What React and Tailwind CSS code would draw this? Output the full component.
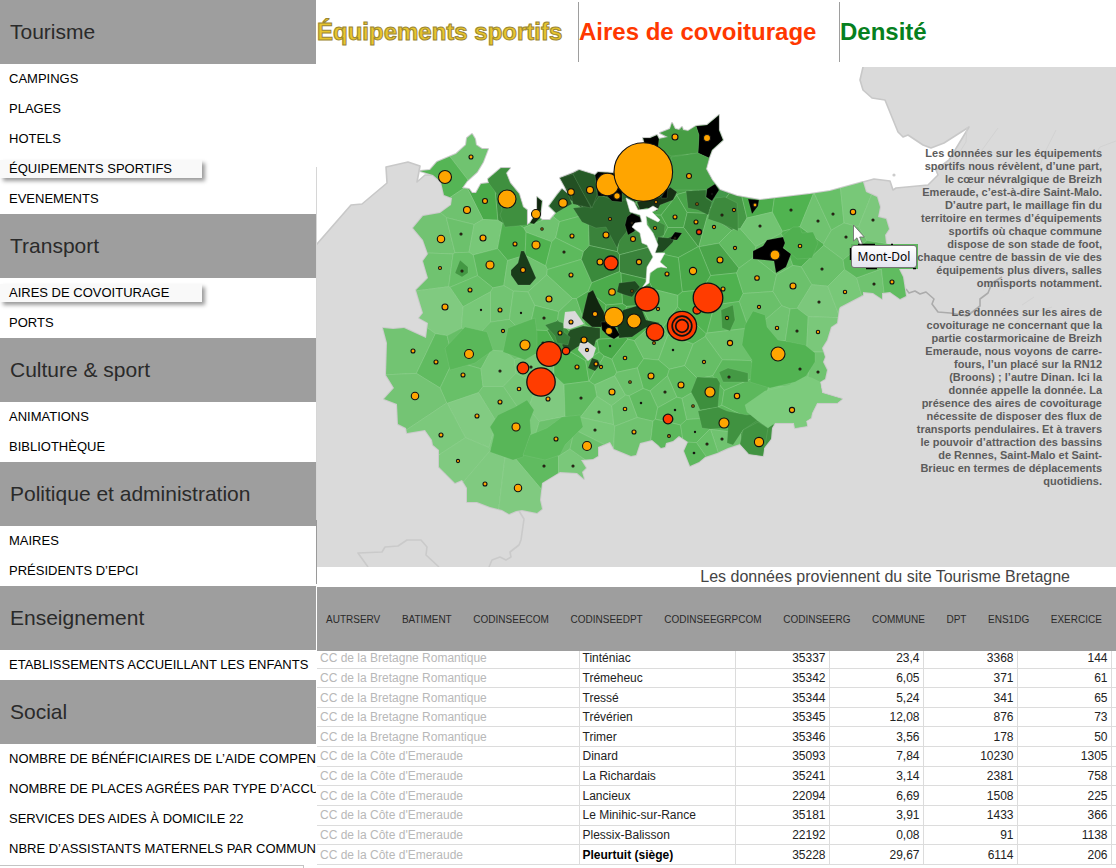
import React from "react";

const MENU = [
  { title: "Tourisme", items: ["CAMPINGS", "PLAGES", "HOTELS", "ÉQUIPEMENTS SPORTIFS", "EVENEMENTS"] },
  { title: "Transport", items: ["AIRES DE COVOITURAGE", "PORTS"] },
  { title: "Culture & sport", items: ["ANIMATIONS", "BIBLIOTHÈQUE"] },
  { title: "Politique et administration", items: ["MAIRES", "PRÉSIDENTS D’EPCI"] },
  { title: "Enseignement", items: ["ETABLISSEMENTS ACCUEILLANT LES ENFANTS"] },
  {
    title: "Social",
    items: [
      "NOMBRE DE BÉNÉFICIAIRES DE L’AIDE COMPEN",
      "NOMBRE DE PLACES AGRÉES PAR TYPE D’ACCU",
      "SERVICES DES AIDES À DOMICILE 22",
      "NBRE D’ASSISTANTS MATERNELS PAR COMMUN",
    ],
  },
];
const ACTIVE = ["ÉQUIPEMENTS SPORTIFS", "AIRES DE COVOITURAGE"];

const FIELDS = ["AUTRSERV", "BATIMENT", "CODINSEECOM", "CODINSEEDPT", "CODINSEEGRPCOM", "CODINSEERG", "COMMUNE", "DPT", "ENS1DG", "EXERCICE"];

const BR = "CC de la Bretagne Romantique";
const CE = "CC de la Côte d'Emeraude";
const ROWS = [
  [BR, "Tinténiac", "35337", "23,4", "3368", "144"],
  [BR, "Trémeheuc", "35342", "6,05", "371", "61"],
  [BR, "Tressé", "35344", "5,24", "341", "65"],
  [BR, "Trévérien", "35345", "12,08", "876", "73"],
  [BR, "Trimer", "35346", "3,56", "178", "50"],
  [CE, "Dinard", "35093", "7,84", "10230", "1305"],
  [CE, "La Richardais", "35241", "3,14", "2381", "758"],
  [CE, "Lancieux", "22094", "6,69", "1508", "225"],
  [CE, "Le Minihic-sur-Rance", "35181", "3,91", "1433", "366"],
  [CE, "Plessix-Balisson", "22192", "0,08", "91", "1138"],
  [CE, "Pleurtuit (siège)", "35228", "29,67", "6114", "206"],
];

// Communes: x, y, radius of the sports marker, density colour
const SITES = [
  [471, 157, 2, "#70c370"], [445, 177, 6.5, "#55b555"], [507, 199, 9, "#3f903f"], [485, 201, 2.5, "#4aab4a"],
  [467, 210, 3.5, "#6fc26f"], [441, 239, 3.7, "#72c372"], [461, 234, 1, "#6cc16c"], [483, 238, 3, "#78c878"],
  [536, 214, 4.5, "#4fb24f"], [563, 203, 4.3, "#5dba5d"], [571, 192, 3.3, "#235023"], [542, 229, 1.2, "#70c370"],
  [515, 244, 2, "#50b050"], [536, 245, 4, "#50b350"], [572, 236, 2, "#5dba5d"], [564, 252, 1, "#5dba5d"],
  [490, 265, 4, "#5cb85c"], [523, 270, 2.5, "#70c370"], [571, 275, 2, "#60bc60"], [440, 268, 1.5, "#70c370"],
  [462, 271, 1, "#68c068"], [470, 290, 2, "#68c068"], [445, 307, 3, "#80ca80"], [549, 299, 3, "#70c370"],
  [675, 137, 3, "#469d44"], [707, 138, 3.5, "#469d44"], [689, 176, 2.5, "#49a149"], [590, 190, 3.5, "#265a27"],
  [617, 196, 3, "#2c682e"], [610, 219, 1.5, "#2c682e"], [606, 235, 3, "#3a833b"], [633, 239, 2.5, "#3d8a3d"],
  [632, 223, 1, "#2c682e"], [656, 202, 1.5, "#4aa54a"], [675, 217, 2, "#4aa54a"], [655, 228, 1.5, "#4aa54a"],
  [697, 204, 1.3, "#4aa54a"], [712, 194, 0.7, "#43984a"], [696, 222, 2, "#439843"], [714, 227, 1.6, "#60b860"],
  [722, 215, 1, "#3d8a3d"], [734, 210, 1.6, "#469946"], [755, 205, 2, "#4cad4c"], [675, 238, 1, "#4aa54a"],
  [735, 248, 1.6, "#62bb62"], [720, 260, 3, "#4aa54a"], [693, 271, 3.6, "#4aa94a"], [639, 262, 2.6, "#3a833b"],
  [600, 262, 3, "#3a8a3b"], [667, 274, 2, "#4aa94a"], [612, 292, 3.3, "#4cac4c"], [632, 291, 1.2, "#3f953f"],
  [723, 289, 2, "#4fb24f"], [760, 226, 1, "#72c472"], [791, 210, 1, "#50b350"], [818, 221, 1, "#70c370"],
  [833, 214, 1, "#68c068"], [853, 212, 2.7, "#78c878"], [873, 220, 1, "#7cc87c"], [846, 237, 1, "#70c370"],
  [775, 255, 5, "#66be66"], [800, 246, 1.8, "#50b050"], [822, 269, 1, "#6ac06a"], [757, 278, 2.3, "#66be66"],
  [793, 286, 3, "#6cc16c"], [759, 307, 1.6, "#6ac06a"], [819, 302, 1, "#7cc87c"], [845, 292, 1.7, "#78c878"],
  [874, 284, 1, "#70c370"], [892, 282, 2, "#60bc60"], [866, 262, 0, "#5cb85c"],
  [481, 310, 0.6, "#78c878"], [500, 310, 2, "#72c472"], [521, 313, 0.6, "#70c370"], [503, 331, 1.6, "#6cc16c"],
  [544, 318, 1, "#60bb60"], [571, 322, 2, "#66be66"], [560, 333, 2, "#3f953f"], [413, 351, 2, "#72c472"],
  [436, 362, 2, "#60bb60"], [469, 354, 4.5, "#66be66"], [525, 345, 5, "#70c370"], [543, 343, 1, "#4fb24f"],
  [463, 375, 2, "#68c068"], [500, 371, 1, "#7cc97c"], [531, 367, 1, "#78c878"], [519, 389, 1.8, "#76c676"],
  [548, 399, 2, "#80ca80"], [577, 367, 2, "#52b452"], [415, 396, 3.7, "#74c474"], [500, 402, 2, "#74c574"],
  [477, 416, 2, "#82cb82"], [516, 427, 4, "#7cc97c"], [441, 435, 2, "#7cc97c"], [556, 439, 2, "#6cc16c"],
  [458, 461, 1.6, "#80ca80"], [544, 466, 1, "#60bb60"], [573, 466, 1, "#7ac87a"], [485, 484, 2, "#80ca80"],
  [518, 488, 3.7, "#80ca80"], [595, 314, 2.6, "#4cac4c"], [614, 317, 9.7, "#4cac4c"], [634, 321, 7, "#4fb24f"],
  [609, 331, 3.5, "#4cac4c"], [584, 340, 3, "#58b658"], [587, 350, 1.6, "#52b452"], [610, 346, 0.7, "#4aab4a"],
  [625, 358, 1.8, "#5dba5d"], [596, 364, 2, "#58b658"], [601, 367, 1.6, "#60bb60"], [658, 309, 1.6, "#66be66"],
  [654, 343, 1.4, "#6cc16c"], [673, 350, 0.7, "#68c068"], [682, 326, 0, "#55b555"], [697, 310, 0, "#52b452"],
  [727, 318, 1.6, "#5cb85c"], [730, 343, 2.6, "#6cc16c"], [704, 362, 1.6, "#66be66"], [651, 376, 3, "#5dba5d"],
  [681, 385, 3, "#60bb60"], [612, 392, 3, "#76c676"], [630, 382, 1.3, "#6cc16c"], [665, 392, 1, "#6ac06a"],
  [710, 392, 5, "#5cb85c"], [737, 396, 2.7, "#5cb85c"], [729, 377, 1, "#5cb85c"], [581, 398, 1, "#62bc62"],
  [641, 403, 0.7, "#62bc62"], [625, 409, 1.8, "#70c370"], [693, 406, 1.3, "#6cc16c"], [675, 410, 0.7, "#60bb60"],
  [599, 412, 1, "#78c878"], [595, 430, 1, "#78c878"], [634, 432, 2, "#70c370"], [669, 436, 1.4, "#5cb85c"],
  [695, 432, 0.6, "#60bb60"], [724, 423, 5, "#5cb85c"], [722, 439, 1, "#70c370"], [707, 444, 1, "#68c068"],
  [694, 453, 0.8, "#5cb85c"], [587, 446, 4.5, "#6cc16c"], [759, 442, 4.6, "#419341"], [777, 328, 1.7, "#70c370"],
  [797, 331, 1, "#62bc62"], [818, 332, 1.7, "#7ac87a"], [778, 354, 7, "#52b352"], [800, 369, 1, "#70c370"],
  [818, 372, 1, "#70c370"], [792, 410, 2.6, "#7ccb7c"],
];

const PATCHES = [
  ["#000", "696,126 707,125 719,115 719,130 723,140 712,150 709,158 698,153 699,135"],
  ["#469d44", "659,139 668,137 660,133 670,129 672,123 675,129 688,131 696,126 699,135 698,153 671,156 658,148"],
  ["#49a149", "671,157 698,153 709,158 706,169 712,180 716,186 705,190 673,190 668,185 672,172"],
  ["#3f903f", "488,179 501,168 510,168 506,173 510,183 519,194 523,207 527,210 527,225 505,227 500,215 502,210 499,197 488,182"],
  ["#193c1a", "521,251 524,251 529,262 536,278 530,285 518,285 511,275 511,270 518,263"],
  ["#11260f", "537,197 542,201 540,218 534,224 530,223 531,218 537,212"],
  ["#265c28", "549,206 557,195 562,189 568,194 572,204 568,206 556,213"],
  ["#2c682e", "573,208 592,206 600,195 613,200 626,200 634,212 628,230 620,240 617,248 610,235 606,227 596,228 582,222"],
  ["#235023", "560,178 573,174 584,194 591,208 573,204 571,194 565,187"],
  ["#265a27", "573,174 579,170 595,175 597,195 592,208 582,191"],
  ["#000", "595,175 598,172 613,173 622,185 622,202 612,201 607,196 598,196"],
  ["#000", "643,138 650,138 657,135 659,139 658,148 645,145"],
  ["#173015", "637,202 660,197 670,187 677,192 673,200 660,205 657,211 647,208 640,210"],
  ["#000", "668,186 661,198 667,198"],
  ["#2f7030", "686,191 706,190 706,198 712,202 708,215 698,210 688,208"],
  ["#3d8a3d", "710,210 715,198 725,197 737,203 738,215 738,231 720,223 708,219"],
  ["#000", "715,184 719,190 712,201 706,197 707,189"],
  ["#000", "748,199 759,200 758,206 752,214"],
  ["#000", "632,213 640,217 641,222 633,225 635,231 628,235 625,225 627,217"],
  ["#3d8a3d", "645,215 665,225 664,235 656,239 650,228"],
  ["#1f4a20", "658,237 668,238 675,235 673,242 663,252 655,253 657,243"],
  ["#000", "675,232 682,233 677,240 670,239"],
  ["#50b050", "783,235 793,227 800,227 802,233 813,232 818,243 812,258 797,259 790,253 783,247"],
  ["#000", "753,251 763,246 767,240 783,237 785,243 783,248 791,254 786,267 776,273 774,261 753,259"],
  ["#11260f", "593,290 599,303 604,312 605,322 601,327 592,327 582,318 585,305 588,293"],
  ["#193c1a", "623,310 640,305 646,320 660,323 645,328 632,337 619,338 617,325"],
  ["#000", "601,322 612,322 620,335 614,339 608,336 602,330"],
  ["#1f4a20", "617,292 619,283 635,281 640,287 632,297 625,295"],
  ["#235023", "570,330 583,326 600,328 600,338 596,340 594,347 587,342 579,346 567,354 562,345"],
  ["#dadada", "565,312 575,311 584,324 570,329 563,328"],
  ["#dadada", "580,343 588,342 596,348 593,357 588,361 578,350"],
  ["#37803a", "545,325 557,321 563,323 564,332 570,337 568,345 557,343 555,336"],
  ["#1f4a20", "592,358 598,360 600,365 595,371 588,368"],
  ["#40933f", "721,310 733,305 735,320 730,331 722,328"],
  ["#3d8f3d", "697,377 717,378 720,383 718,407 700,410 697,403 691,392"],
  ["#449944", "719,372 728,368 748,373 748,382 723,382"],
  ["#409240", "698,411 718,407 727,411 747,415 757,413 758,420 743,430 733,445 727,443 728,428 710,429 702,428"],
  ["#419341", "743,430 758,422 768,428 766,440 763,456 749,454 740,444"],
  ["#7ccb7c", "745,405 765,391 790,385 800,375 812,378 822,383 822,393 842,399 837,403 817,403 812,413 807,426 795,428 794,423 775,423 768,428 758,421 747,412"],
  ["#52b352", "753,311 765,315 767,327 778,340 790,342 805,345 815,353 815,362 806,376 795,382 770,388 750,382 752,360 742,345 745,325"],
  ["#439843", "460,260 468,267 468,273 462,277 455,273"],
  ["#58b658", "527,400 534,410 530,420 531,433 523,457 513,460 490,452 494,435 490,427 498,415 515,407"],
  ["#58b658", "508,328 535,318 537,333 537,353 525,360 503,352"],
  ["#5cba5c", "523,455 530,435 547,428 562,417 580,415 583,427 565,445 560,455 545,460"],
  ["#5ab85a", "445,348 465,327 487,332 493,350 475,363 450,370"],
];

const OUTLINE =
  "420,171 430,170 437,162 456,154 466,145 467,138 472,134 475,139 476,145 482,149 488,149 483,162 477,172 467,181 462,188 469,189 472,193 476,193 481,184 489,183 488,179 501,168 510,168 506,173 510,183 519,194 523,207 527,210 527,225 530,223 537,212 537,197 542,201 540,218 542,220 550,220 556,213 549,206 557,195 562,189 568,194 565,187 560,178 573,173 579,170 595,175 598,172 613,173 640,160 645,145 643,138 650,138 657,135 659,139 668,137 660,133 670,129 672,123 675,129 679,130 682,127 683,130 688,131 696,126 707,125 719,115 719,130 723,140 712,150 709,158 706,169 712,180 720,190 737,196 760,200 810,194 830,191 863,182 866,192 877,197 880,207 878,217 886,219 889,229 885,235 886,243 899,269 903,277 906,296 900,299 890,292 882,293 882,299 873,293 863,292 863,295 840,307 839,309 837,323 831,327 827,340 822,348 825,357 823,362 827,370 825,379 820,382 822,393 842,399 837,403 817,403 812,413 811,418 806,421 807,426 795,428 794,423 775,423 772,428 771,439 764,448 763,456 749,454 740,444 728,448 717,453 705,457 699,462 690,466 684,451 688,442 679,436 673,441 666,443 665,447 661,448 658,445 652,440 640,443 636,455 631,456 614,449 610,442 598,447 598,456 593,459 581,460 586,468 582,472 584,479 577,473 560,472 542,483 540,500 542,509 537,513 522,510 516,511 509,514 502,510 490,507 477,502 467,502 467,488 462,480 455,483 445,473 439,467 439,450 433,445 432,440 425,430 407,433 406,428 398,424 397,404 384,399 394,388 386,375 387,343 383,328 393,329 404,328 415,333 426,338 428,323 419,318 423,313 419,300 416,290 428,278 423,261 428,254 423,240 413,228 423,216 440,213 451,205 452,198 444,195 441,182 433,175";

const SEA =
  "300,50 863,50 863,67 860,80 863,90 872,98 885,100 898,132 903,137 908,135 923,145 931,148 944,143 969,127 949,160 936,170 938,175 928,185 896,188 893,190 890,181 874,179 863,182 800,230 700,250 560,240 470,200 452,198 441,182 433,175 425,175 417,182 420,166 408,162 386,167 387,183 362,204 351,205 317,244 300,262";

const RIVER =
  "626,198 634,202 638,210 648,209 653,206 658,209 652,212 660,220 658,222 646,216 647,225 653,233 658,245 655,253 665,253 660,262 667,268 661,267 657,268 650,273 649,283 642,288 646,282 647,267 653,257 647,245 642,243 640,233 632,227 635,223 642,222 640,215 630,212";

const CARPOOL = [
  [611, 263, 7], [699, 232, 2.5], [647, 299, 12], [697, 310, 4], [708, 298, 14.8], [655, 332, 8.7], [682, 326, 14.6],
  [549, 354, 12.3], [566, 351, 3.7], [523, 368, 5.8], [541, 382, 14.2], [668, 419, 4.8],
];

// Cell of one site: the map frame clipped by the bisector with every other site
function cellOf(index) {
  const [ax, ay] = SITES[index];
  let poly = [[370, 100], [930, 100], [930, 530], [370, 530]];
  SITES.forEach(([bx, by], j) => {
    if (j === index || Math.hypot(ax - bx, ay - by) > 150) return;
    const nx = bx - ax;
    const ny = by - ay;
    const c = (bx * bx + by * by - ax * ax - ay * ay) / 2;
    const side = ([x, y]) => x * nx + y * ny - c;
    const next = [];
    poly.forEach((p, k) => {
      const q = poly[(k + 1) % poly.length];
      const sp = side(p);
      const sq = side(q);
      if (sp <= 0) next.push(p);
      if (sp * sq < 0) {
        const t = sp / (sp - sq);
        next.push([p[0] + t * (q[0] - p[0]), p[1] + t * (q[1] - p[1])]);
      }
    });
    poly = next;
  });
  return poly.map(([x, y]) => `${x.toFixed(1)},${y.toFixed(1)}`).join(" ");
}
const CELLS = SITES.map((s, i) => [s[3], cellOf(i)]);

function MapDrawing() {
  return (
    <svg viewBox="317 67 799 500" className="block w-full" role="img" aria-label="Carte des communes">
      <defs>
        <clipPath id="land"><polygon points={OUTLINE} /></clipPath>
        <clipPath id="frame"><rect x="317" y="67" width="799" height="500" /></clipPath>
      </defs>
      <g clipPath="url(#frame)">
        <rect x="317" y="67" width="799" height="500" fill="#dadada" />
        <polygon points={SEA} fill="#fff" stroke="#c8c8c8" strokeWidth="1.6" strokeLinejoin="round" />
        <circle cx="894" cy="175" r="1.6" fill="#ccc" />
        <g fill="none" stroke="#cacaca" strokeWidth="1.6" strokeLinejoin="round">
          <path d="M368 567L358 553L382 552L385 547L398 546L407 540H421L427 547L426 555L439 567" />
          <path d="M519 511L524 519L521 540L519 545L510 552L511 557L506 560L500 557L492 560L489 567" />
          <path d="M906 289L909 293L915 291L920 294L926 292L934 299L932 304L938 312L950 313L962 315L967 316L980 306V299L988 293L992 283L1002 277" stroke="#ababab" />
          <path d="M967 127L966 142L953 163M998 128L982 150L968 170M1056 130L1045 152L1040 165M1116 141L1100 147L1092 160L1083 164M970 160L990 150M1003 290L1020 279L1050 262M1022 305L1034 297M1012 329L1020 318L1052 307M1060 170L1040 190M978 176L962 200" stroke="#d2d2d2" strokeWidth="1" />
        </g>
        <polygon points={OUTLINE} fill="#5cb85c" stroke="#cbcbcb" strokeWidth="2" strokeLinejoin="round" />
        <g clipPath="url(#land)" stroke="#a5d8a5" strokeOpacity="0.4" strokeWidth="0.8" strokeLinejoin="round">
          {CELLS.map(([fill, points], i) => <polygon key={i} points={points} fill={fill} />)}
          {PATCHES.map(([fill, points], i) => <polygon key={i} points={points} fill={fill} strokeOpacity="0.2" />)}
        </g>
        <polygon points={RIVER} fill="#fff" stroke="#ddd" strokeWidth="0.6" />
        <rect x="851" y="244" width="67" height="25" fill="#5cb85c" />
        <path d="M858 244.500H875M850.500 248V260M866 268.500H877M891 244.500H893M913 268.500H916" stroke="#000" strokeWidth="1.4" />
        <g stroke="#111" strokeWidth="1.1" fill="#ffa500">
          {SITES.filter((s) => s[2] > 0).map(([x, y, r], i) => <circle key={i} cx={x} cy={y} r={r} />)}
          <circle cx="607.500" cy="184.500" r="11.300" />
          <circle cx="617" cy="196" r="3.200" />
          <circle cx="643.300" cy="172" r="29.300" />
          <g fill="#ff3c00" strokeWidth="1.3">
            {CARPOOL.map(([x, y, r], i) => <circle key={i} cx={x} cy={y} r={r} />)}
          </g>
        </g>
        <g fill="none" stroke="#111" strokeWidth="1.7">
          <circle cx="682" cy="326" r="9.800" />
          <circle cx="682" cy="326" r="6.300" />
        </g>
        <path d="M853.500 225V241L857 237.800L859.500 244H862.500L859.700 237H864.300Z" fill="#fff" stroke="#666" strokeWidth="0.8" />
      </g>
    </svg>
  );
}

function Lines({ text }) {
  return (
    <p>
      {text.split("|").map((line, i) => <span key={i} className="block whitespace-nowrap">{line}</span>)}
    </p>
  );
}

export default function App() {
  return (
    <div className="flex h-screen overflow-hidden bg-white font-['Liberation_Sans',Arial,sans-serif] text-black">
      <aside className="w-79 shrink-0 overflow-hidden">
        {MENU.map((group) => (
          <section key={group.title}>
            <h2 className="flex h-16 items-center bg-[#9e9e9e] pl-2.5 text-[21px] text-[#2a2a2a]">{group.title}</h2>
            <ul>
              {group.items.map((item) => (
                <li key={item} className="flex h-[30px] items-center">
                  <a
                    href="#"
                    className={
                      ACTIVE.includes(item)
                        ? "block w-[202px] bg-[#f9f9f9] pl-[9px] text-[13px] leading-[18px] whitespace-nowrap shadow-[3px_3px_4px_rgba(0,0,0,0.4)]"
                        : "block pl-[9px] text-[13px] leading-[18px] whitespace-nowrap"
                    }
                  >
                    {item}
                  </a>
                </li>
              ))}
            </ul>
          </section>
        ))}
        <div className="mt-px mr-3 h-1 border-t border-r border-[#c4c4c4]" />
      </aside>

      <div className="flex w-px shrink-0 flex-col">
        <div className="h-[167px]" />
        <div className="h-[353px] bg-[#d6d6d6]" />
        <div className="h-16 bg-[#9a9a9a]" />
      </div>

      <main className="min-w-0 flex-1">
        <nav className="flex h-[67px] items-start pt-0.5 text-2xl font-bold">
          <a href="#" className="flex h-[60px] w-[261px] items-center whitespace-nowrap text-[#e8c52c] [-webkit-text-stroke:1px_#9a8634]">Équipements sportifs</a>
          <a href="#" className="flex h-[60px] w-[261px] items-center border-l border-[#9e9e9e] whitespace-nowrap text-[#ff3800]">Aires de covoiturage</a>
          <a href="#" className="flex h-[60px] items-center border-l border-[#9e9e9e] text-[#068020]">Densité</a>
        </nav>

        <div className="relative">
          <MapDrawing />
          <div role="tooltip" className="absolute top-[178px] left-[534px] flex h-[23px] w-[66px] items-center justify-center rounded-[3px] border border-[#767676] bg-linear-to-b from-white to-[#e4e5f0] font-['Noto_Sans',sans-serif] text-xs">
            Mont-Dol
          </div>
          <div className="absolute top-[80px] right-3.5 flex flex-col gap-4 text-right text-[11px] leading-[13px] font-bold text-[#5c5c5c]">
            <Lines text="Les données sur les équipements|sportifs nous révèlent, d’une part,|le cœur névralgique de Breizh|Emeraude, c’est-à-dire Saint-Malo.|D’autre part, le maillage fin du|territoire en termes d’équipements|sportifs où chaque commune|dispose de son stade de foot,|chaque centre de bassin de vie des|équipements plus divers, salles|omnisports notamment." />
            <Lines text="Les données sur les aires de|covoiturage ne concernant que la|partie costarmoricaine de Breizh|Emeraude, nous voyons de carre-|fours, l’un placé sur la RN12|(Broons) ; l’autre Dinan. Ici la|donnée appelle la donnée. La|présence des aires de covoiturage|nécessite de disposer des flux de|transports pendulaires. Et à travers|le pouvoir d’attraction des bassins|de Rennes, Saint-Malo et Saint-|Brieuc en termes de déplacements|quotidiens." />
          </div>
        </div>

        <p className="pr-[46px] text-right text-base leading-5 text-[#444]">Les données proviennent du site Tourisme Bretagne</p>

        <ul className="flex h-16 items-center justify-between bg-[#9e9e9e] pr-3.5 pl-[9px] text-[10px] text-[#2a2a2a]">
          {FIELDS.map((f) => <li key={f}><a href="#">{f}</a></li>)}
        </ul>

        <div className="overflow-hidden">
          <table className="-mt-0.5 h-[216px] w-full table-fixed border-collapse text-xs leading-4 text-[#222]">
            <colgroup>
              <col className="w-[262px]" />
              <col className="w-[156px]" />
              <col className="w-[94px]" />
              <col className="w-[94px]" />
              <col className="w-[94px]" />
              <col className="w-[94px]" />
              <col />
            </colgroup>
            <tbody>
              {ROWS.map((row, i) => (
                <tr key={i} className="border-b border-[#dcdcdc]">
                  <td className="border-r border-[#dcdcdc] pl-[3px] text-[#b8b8b8]">{row[0]}</td>
                  <td className={i === 10 ? "border-r border-[#dcdcdc] pl-[3px] font-bold text-black" : "border-r border-[#dcdcdc] pl-[3px]"}>{row[1]}</td>
                  {row.slice(2).map((v, k) => <td key={k} className="border-r border-[#dcdcdc] pr-[3px] text-right">{v}</td>)}
                  <td />
                </tr>
              ))}
            </tbody>
          </table>
        </div>
      </main>
    </div>
  );
}
